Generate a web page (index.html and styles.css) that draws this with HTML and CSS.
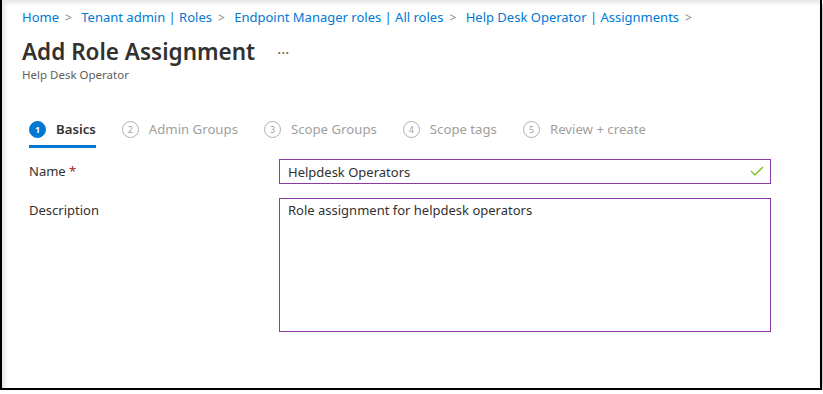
FILE: index.html
```html
<!DOCTYPE html>
<html lang="en">
<head>
    <meta charset="UTF-8">
    <meta name="viewport" content="width=device-width, initial-scale=1.0">
    <title>Add Role Assignment</title>
    <link rel="stylesheet" href="styles.css">
</head>
<body>
    <div class="frame">
        <nav class="breadcrumb">
            <a href="#">Home</a><span class="sep">&gt;</span>
            <a href="#">Tenant admin | Roles</a><span class="sep">&gt;</span>
            <a href="#">Endpoint Manager roles | All roles</a><span class="sep">&gt;</span>
            <a href="#">Help Desk Operator | Assignments</a><span class="sep">&gt;</span>
        </nav>

        <div class="title-row">
            <h1>Add Role Assignment</h1>
            <span class="more">&middot;&middot;&middot;</span>
        </div>
        <div class="subtitle">Help Desk Operator</div>

        <div class="steps">
            <div class="step active"><span class="num">1</span>Basics</div>
            <div class="step"><span class="num">2</span>Admin Groups</div>
            <div class="step"><span class="num">3</span>Scope Groups</div>
            <div class="step"><span class="num">4</span>Scope tags</div>
            <div class="step"><span class="num">5</span>Review + create</div>
        </div>

        <div class="form">
            <div class="row">
                <label for="name">Name <span class="req">*</span></label>
                <div class="field">
                    <input id="name" type="text" value="Helpdesk Operators">
                    <svg class="check" width="14" height="10" viewBox="0 0 14 10">
                        <path d="M1 5.2 L4.8 9 L13 1" fill="none" stroke="#6bb700" stroke-width="1.2"/>
                    </svg>
                </div>
            </div>
            <div class="row">
                <label for="desc">Description</label>
                <textarea id="desc">Role assignment for helpdesk operators</textarea>
            </div>
        </div>
    </div>
</body>
</html>
```

FILE: styles.css
```css
body {
    margin: 0;
    font-family: "Noto Sans", "Open Sans", sans-serif;
    color: #323130;
    background-color: #fff;
}

.frame {
    width: 822px;
    height: 390px;
    border: 2px solid #000;
    border-top: none;
    box-shadow: 1px 4px 0 #d0d0d0, inset 3px 3px 4px rgba(0,0,0,0.10);
    padding: 0 0 0 20px;
    box-sizing: border-box;
}

.breadcrumb {
    padding-top: 8px;
    font-size: 13px;
    line-height: 18px;
}

.breadcrumb a {
    color: #0078d4;
    text-decoration: none;
}

.breadcrumb .sep {
    color: #8a8886;
    margin: 0 6px;
    font-size: 12px;
}

.title-row {
    display: flex;
    align-items: center;
    margin-top: 10px;
}

h1 {
    margin: 0;
    font-size: 22.5px;
    font-weight: 600;
    line-height: 30px;
}

.more {
    margin-left: 22px;
    font-size: 15px;
    color: #605e5c;
}

.subtitle {
    font-size: 11.5px;
    color: #605e5c;
    line-height: 16px;
}

.steps {
    display: flex;
    gap: 26px;
    margin-top: 37px;
    padding-left: 7px;
}

.step {
    display: flex;
    align-items: center;
    font-size: 13.2px;
    color: #a19f9d;
    padding-bottom: 7px;
    border-bottom: 3px solid transparent;
}

.step .num {
    width: 17px;
    height: 17px;
    border: 1px solid #b3b0ad;
    border-radius: 50%;
    font-size: 9px;
    display: flex;
    align-items: center;
    justify-content: center;
    margin-right: 10px;
    color: #a19f9d;
    box-sizing: border-box;
}

.step.active {
    color: #323130;
    font-weight: 600;
    border-bottom-color: #0078d4;
}

.step.active .num {
    background-color: #0078d4;
    border-color: #0078d4;
    color: #fff;
    font-weight: 700;
}

.form {
    margin-top: 11px;
    padding-left: 7px;
}

.row {
    display: flex;
    margin-bottom: 14px;
}

label {
    width: 250px;
    font-size: 13px;
    line-height: 24px;
}

.req {
    color: #a4262c;
}

.field {
    position: relative;
}

input, textarea {
    width: 492px;
    border: 1px solid #8e3aa6;
    font-family: inherit;
    font-size: 13px;
    color: #323130;
    padding: 0 8px;
    box-sizing: border-box;
    outline: none;
}

input {
    height: 25px;
}

textarea {
    height: 134px;
    padding-top: 2px;
    resize: none;
}

.check {
    position: absolute;
    right: 7px;
    top: 7px;
}
```
